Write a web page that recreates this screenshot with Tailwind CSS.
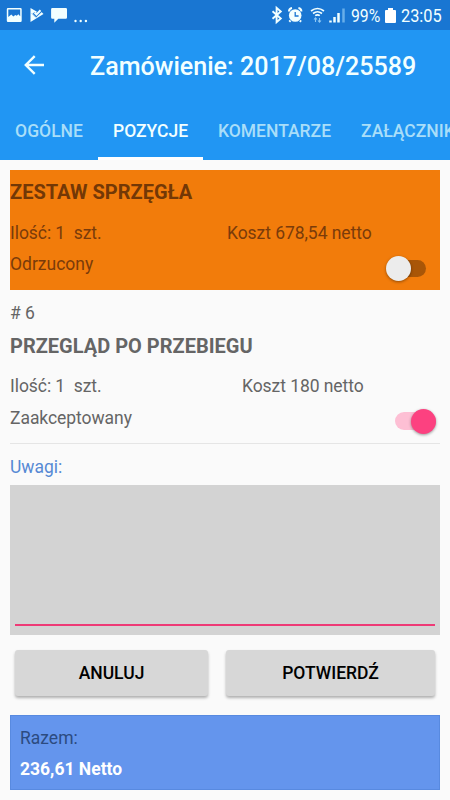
<!DOCTYPE html>
<html lang="pl">
<head>
<meta charset="utf-8">
<title>Zamówienie</title>
<script src="https://cdn.jsdelivr.net/npm/@tailwindcss/browser@4"></script>
</head>
<body class="h-[800px] w-[450px] overflow-hidden bg-[#fafafa] font-['Roboto',sans-serif] text-[17.5px] leading-[20px] text-[#656565]">
<header class="bg-[#2196f3] text-white">
  <!-- Status bar -->
  <div class="flex h-[30px] items-center bg-[#1976d2]">
    <svg class="h-[30px] w-[90px] shrink-0" viewBox="0 0 90 30" fill="#f2ffff">
      <path fill-rule="evenodd" d="M8 8h12.500q1.200 0 1.200 1.200v11.600q0 1.200-1.200 1.200h-12.500q-1.200 0-1.200-1.200v-11.600q0-1.200 1.200-1.200zM8.300 9.500v7.500l3-2.500 2 2 2-1.500 1.500.8 1.500-1.500 1.900 1.900v-6.700z"/>
      <path d="M30.500 8l6.500 3.700-1 1.200-1.500-.9-1.800 1.800 3.500 3.500 5.300-5.200 2 2-13 8z"/>
      <path d="M31.800 13.300l4 4 6.500-6.300" fill="none" stroke="#1976d2" stroke-width="0.500"/>
      <path d="M34.500 12.500l2 2 4-4.200" fill="none" stroke="#f2ffff" stroke-width="2"/>
      <path d="M52.300 8h13.500q1.200 0 1.200 1.200v8.300q0 1.200-1.200 1.200h-7.500l-4 4v-4h-2q-1.200 0-1.200-1.200v-8.300q0-1.200 1.200-1.200z"/>
      <circle cx="75.500" cy="21" r="1.200"/><circle cx="80.700" cy="21" r="1.200"/><circle cx="85.900" cy="21" r="1.200"/>
    </svg>
    <svg class="ml-[180px] h-[30px] w-[80px] shrink-0" viewBox="270 0 80 30" fill="none" stroke="#f2ffff">
      <path d="M272.500 11.200l8.300 7.300-4.200 3.700v-14.400l4.200 3.700-8.300 7.300" stroke-width="1.900"/>
      <circle cx="295.200" cy="15.500" r="6.300" fill="#f2ffff" stroke="none"/>
      <path d="M289 11.500q0-3 3-3.500M301.400 11.500q0-3-3-3.500M290.500 20.500l-1.200 1.300M299.900 20.500l1.200 1.300" stroke-width="2"/>
      <path d="M295.200 12v4h3.400" stroke="#1976d2" stroke-width="1.300"/>
      <path d="M311 11q6.500-5 13 0M313 13.500q4.500-3.500 9 0M315.200 15.700q2.300-1.600 4.600 0" stroke-width="1.600"/>
      <path d="M315.500 22v-4m-1.500 1.500l1.500-1.700 1.500 1.700M319.500 18v4m-1.500-1.500l1.500 1.700 1.500-1.700" stroke="#8ec8f5" stroke-width="1.100"/>
      <path d="M330.500 20.500v2M334.500 17v5.500M338.500 13v9.500" stroke-width="2.500"/>
      <path d="M343.500 8.500v14" stroke="#67aee9" stroke-width="2.500"/>
    </svg>
    <div class="ml-[1px] flex w-[31px] shrink-0"><span class="origin-left scale-x-[0.83] translate-y-[1px] text-[19px] text-[#f2ffff]">99%</span></div>
    <svg class="ml-[3px] h-[15px] w-[11px] shrink-0" viewBox="0 0 11 15" fill="#fff"><path d="M3 0h5v2h2q1 0 1 1v11q0 1-1 1h-9q-1 0-1-1v-11q0-1 1-1h2z"/></svg>
    <span class="ml-[5px] origin-left translate-y-[1px] scale-x-[0.86] text-[19px] text-[#f2ffff]">23:05</span>
  </div>
  <!-- Toolbar -->
  <div class="flex h-[70px] items-center pl-[24px]">
    <svg class="h-[20px] w-[20px]" viewBox="0 0 20 20" fill="none" stroke="#f2ffff" stroke-width="2.400"><path d="M20 10H2M10.700 1.200L1.800 10l8.900 8.800"/></svg>
    <h1 class="ml-[46px] pt-[3px] whitespace-nowrap text-[25.100px] leading-[30px] font-medium text-[#f2ffff]">Zamówienie: 2017/08/25589</h1>
  </div>
  <nav class="flex h-[60px] overflow-hidden pt-[1px] font-medium text-[#a9def9]">
    <div class="flex w-[98px] shrink-0 items-center justify-center">OGÓLNE</div>
    <div class="flex w-[105px] shrink-0 items-center justify-center border-b-[3px] border-white pt-[3px] text-[#f2ffff]">POZYCJE</div>
    <div class="flex w-[143px] shrink-0 items-center justify-center">KOMENTARZE</div>
    <div class="flex shrink-0 items-center pl-[15px]">ZAŁĄCZNIKI</div>
  </nav>
</header>
<main class="px-[10px] pt-[10px]">
  <section class="h-[120px] bg-[#f27c0b] pt-[10px] text-[#7a3b0a]">
    <h2 class="text-[20px] leading-[24px] font-bold text-[#733806]">ZESTAW SPRZĘGŁA</h2>
    <div class="mt-[19px] flex tracking-[-0.060px]"><span class="w-[217px] whitespace-pre">Ilość: 1  szt.</span><span>Koszt 678,54 netto</span></div>
    <div class="mt-[11px] flex justify-between pr-[14px]">
      <span>Odrzucony</span>
      <div class="mt-[6px] flex h-[17px] w-[40px] items-center rounded-full bg-linear-to-r from-transparent from-40% to-[#a95607] to-40%"><div class="size-[25px] rounded-full bg-[#ececec] shadow-[0_1px_3px_rgba(0,0,0,0.4)]"></div></div>
    </div>
  </section>
  <section class="h-[154px] border-b border-[#e5e5e5] pt-[13px] tracking-[-0.060px]">
    <div># 6</div>
    <h2 class="mt-[11px] text-[20px] leading-[24px] font-bold tracking-normal">PRZEGLĄD PO PRZEBIEGU</h2>
    <div class="mt-[18px] flex"><span class="w-[232px] whitespace-pre">Ilość: 1  szt.</span><span>Koszt 180 netto</span></div>
    <div class="mt-[12px] flex justify-between pr-[4px]">
      <span>Zaakceptowany</span>
      <div class="mt-[4px] flex h-[18px] w-[41px] items-center justify-end rounded-full bg-[#fdbfd4]"><div class="size-[25px] shrink-0 rounded-full bg-[#fc4180] shadow-[0_1px_3px_rgba(0,0,0,0.4)]"></div></div>
    </div>
  </section>
  <label class="mt-[13px] block text-[#5689d4]">Uwagi:</label>
  <div class="mt-[8px] flex h-[150px] items-end bg-[#d3d3d3] px-[5px] pb-[9px]"><div class="h-[2px] w-full bg-[#ee3a76]"></div></div>
  <div class="mt-[15px] flex gap-[18px] px-[5px] font-medium text-black">
    <button class="h-[46px] w-[193px] rounded-[3px] bg-[#d7d7d7] shadow-[0_2px_3px_rgba(0,0,0,0.3)]">ANULUJ</button>
    <button class="h-[46px] w-[209px] rounded-[3px] bg-[#d7d7d7] shadow-[0_2px_3px_rgba(0,0,0,0.3)]">POTWIERDŹ</button>
  </div>
  <section class="mt-[19px] h-[75px] border border-[#588ae0] bg-[#6495ed] px-[9px] pt-[12px]">
    <div class="text-[#2c4b80]">Razem:</div>
    <div class="mt-[11px] font-bold text-white">236,61 Netto</div>
  </section>
</main>
</body>
</html>
